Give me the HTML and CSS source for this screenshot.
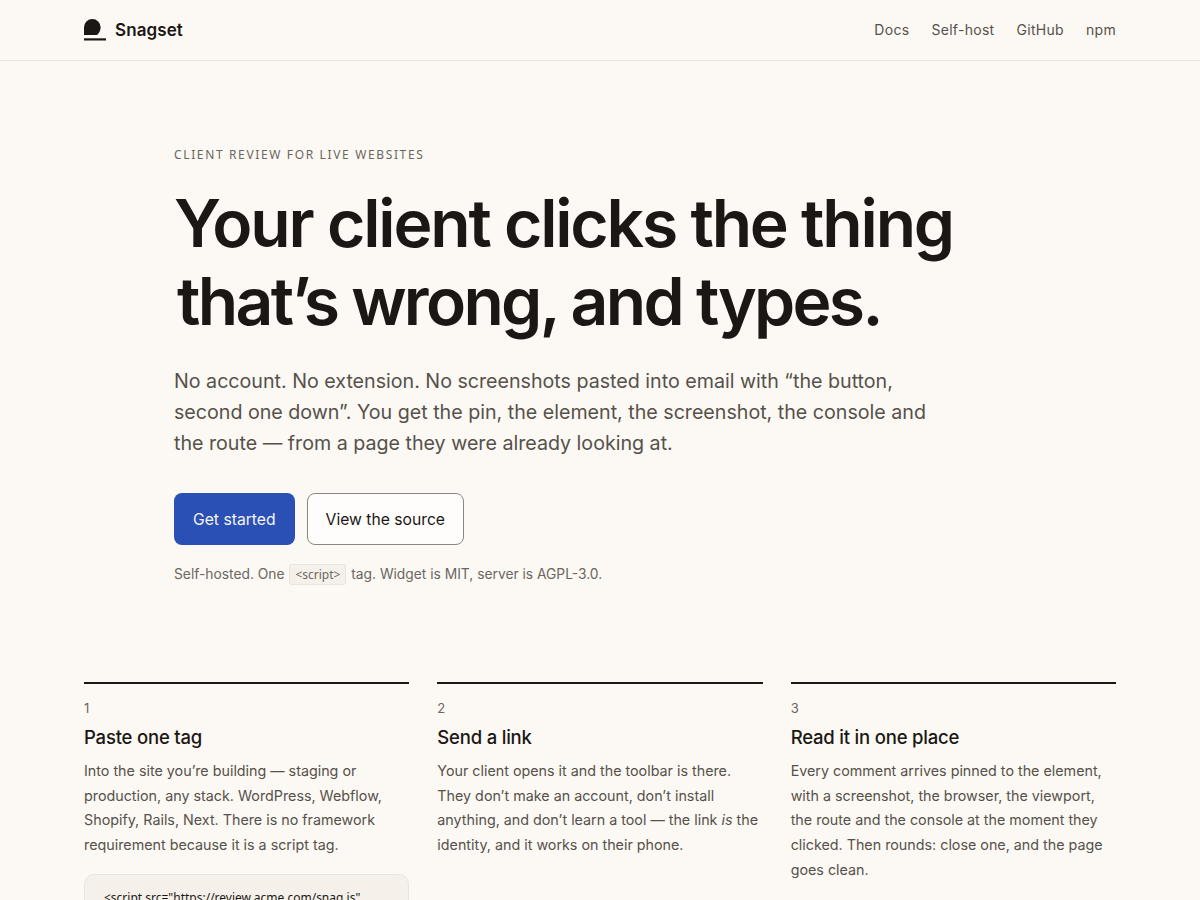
FILE: index.html
```html
<!DOCTYPE html>
<html lang="en">
<head>
<meta charset="utf-8">
<title>Snagset</title>
<link rel="stylesheet" href="styles.css">
</head>
<body>
<header class="topbar">
  <a class="brand" href="#">
    <svg class="brand-mark" width="22" height="22" viewBox="0 0 22 22" aria-hidden="true">
      <path d="M0 16V8.300A8.300 8.300 0 0 1 16.600 8.300C16.600 11 15.600 14 13 16Z" fill="#1a1714"/>
      <rect x="0" y="19.300" width="22" height="2.200" fill="#1a1714"/>
    </svg>
    <span class="brand-name">Snagset</span>
  </a>
  <nav class="nav">
    <a href="#">Docs</a>
    <a href="#">Self-host</a>
    <a href="#">GitHub</a>
    <a href="#">npm</a>
  </nav>
</header>
<main class="page">
  <section class="hero">
    <p class="eyebrow">CLIENT REVIEW FOR LIVE WEBSITES</p>
    <h1 class="headline">Your client clicks the thing<br><span class="headline-second">that’s wrong, and types.</span></h1>
    <p class="lede">No account. No extension. No screenshots pasted into email with “the button, second one down”. You get the pin, the element, the screenshot, the console and the route — from a page they were already looking at.</p>
    <div class="actions">
      <a class="btn btn-primary" href="#">Get started</a>
      <a class="btn btn-secondary" href="#">View the source</a>
    </div>
    <p class="note">Self-hosted. One <code class="tag">&lt;script&gt;</code> tag. Widget is MIT, server is AGPL-3.0.</p>
  </section>
  <section class="steps">
    <article class="step">
      <div class="step-num">1</div>
      <h2 class="step-title">Paste one tag</h2>
      <p class="step-body">Into the site you’re building — staging or production, any stack. WordPress, Webflow, Shopify, Rails, Next. There is no framework requirement because it is a script tag.</p>
      <pre class="snippet">&lt;script src="https://review.acme.com/snag.js"</pre>
    </article>
    <article class="step">
      <div class="step-num">2</div>
      <h2 class="step-title">Send a link</h2>
      <p class="step-body">Your client opens it and the toolbar is there. They don’t make an account, don’t install anything, and don’t learn a tool — the link <em>is</em> the identity, and it works on their phone.</p>
    </article>
    <article class="step">
      <div class="step-num">3</div>
      <h2 class="step-title">Read it in one place</h2>
      <p class="step-body">Every comment arrives pinned to the element, with a screenshot, the browser, the viewport, the route and the console at the moment they clicked. Then rounds: close one, and the page goes clean.</p>
    </article>
  </section>
</main>
</body>
</html>
```
FILE: styles.css
```css
* { box-sizing: border-box; }
html, body { margin: 0; padding: 0; }
body {
  background: #fcf9f4;
  color: #1a1714;
  font-family: Inter, "Liberation Sans", sans-serif;
  height: 900px;
  overflow: hidden;
}
a { color: inherit; text-decoration: none; }
.topbar {
  height: 61px;
  border-bottom: 1px solid #e9e5dd;
  padding: 0 84px;
  display: flex;
  align-items: center;
  justify-content: space-between;
}
.brand { display: flex; align-items: center; gap: 9px; }
.brand-mark { display: block; }
.brand-name { font-size: 17px; font-weight: 600; line-height: 22px; letter-spacing: .1px; }
.nav { display: flex; gap: 22px; font-size: 14px; line-height: 18px; letter-spacing: .3px; color: #56514b; }
.page { padding: 0 84px; }
.hero { padding: 85px 90px 0; }
.eyebrow {
  margin: 0;
  font-family: "Noto Sans", sans-serif;
  font-size: 12px;
  line-height: 18px;
  letter-spacing: 1.640px;
  color: #6b665f;
}
.headline {
  margin: 20px 0 0;
  font-size: 66px;
  line-height: 78px;
  font-weight: 600;
  letter-spacing: -2.200px;
  white-space: nowrap;
}
.headline-second { margin-left: 3px; letter-spacing: -2.700px; }
.lede {
  margin: 26px 0 0;
  width: 770px;
  font-size: 19.650px;
  line-height: 31px;
  color: #56514b;
}
.actions { display: flex; gap: 12px; margin-top: 34px; }
.btn {
  height: 52px;
  padding: 0 19px;
  border-radius: 8px;
  display: flex;
  align-items: center;
  font-size: 15.700px;
}
.btn-primary { background: #2a50b5; color: #f7f5f0; }
.btn-secondary { padding: 0 18px; border: 1px solid #8c8780; background: #fefdfb; color: #1a1714; }
.note { margin: 19px 0 0; font-size: 13.800px; line-height: 21px; color: #6b665f; }
.tag {
  font-family: "Noto Sans", sans-serif;
  font-size: 12px;
  margin: 0 1px;
  padding: 1px 5px;
  background: #f5f1ea;
  border: 1px solid #e9e5dd;
  border-radius: 3px;
}
.steps {
  margin-top: 97px;
  display: grid;
  grid-template-columns: repeat(3, 1fr);
  gap: 28px;
}
.step { border-top: 2px solid #1a1714; padding-top: 15px; }
.step-num { font-size: 13px; line-height: 18px; color: #6b665f; }
.step-title { margin: 9px 0 0; font-size: 18.500px; line-height: 23px; font-weight: 500; letter-spacing: -.2px; }
.step-body { margin: 10px 0 0; font-size: 14.300px; line-height: 24.650px; color: #56514b; }
.snippet {
  margin: 16px 0 0;
  padding: 13px 19px;
  background: #f5f1ea;
  border: 1px solid #e9e5dd;
  border-radius: 10px;
  font-family: "Noto Sans", sans-serif;
  font-size: 12px;
  line-height: 20px;
  color: #1a1714;
  overflow: hidden;
}
```
